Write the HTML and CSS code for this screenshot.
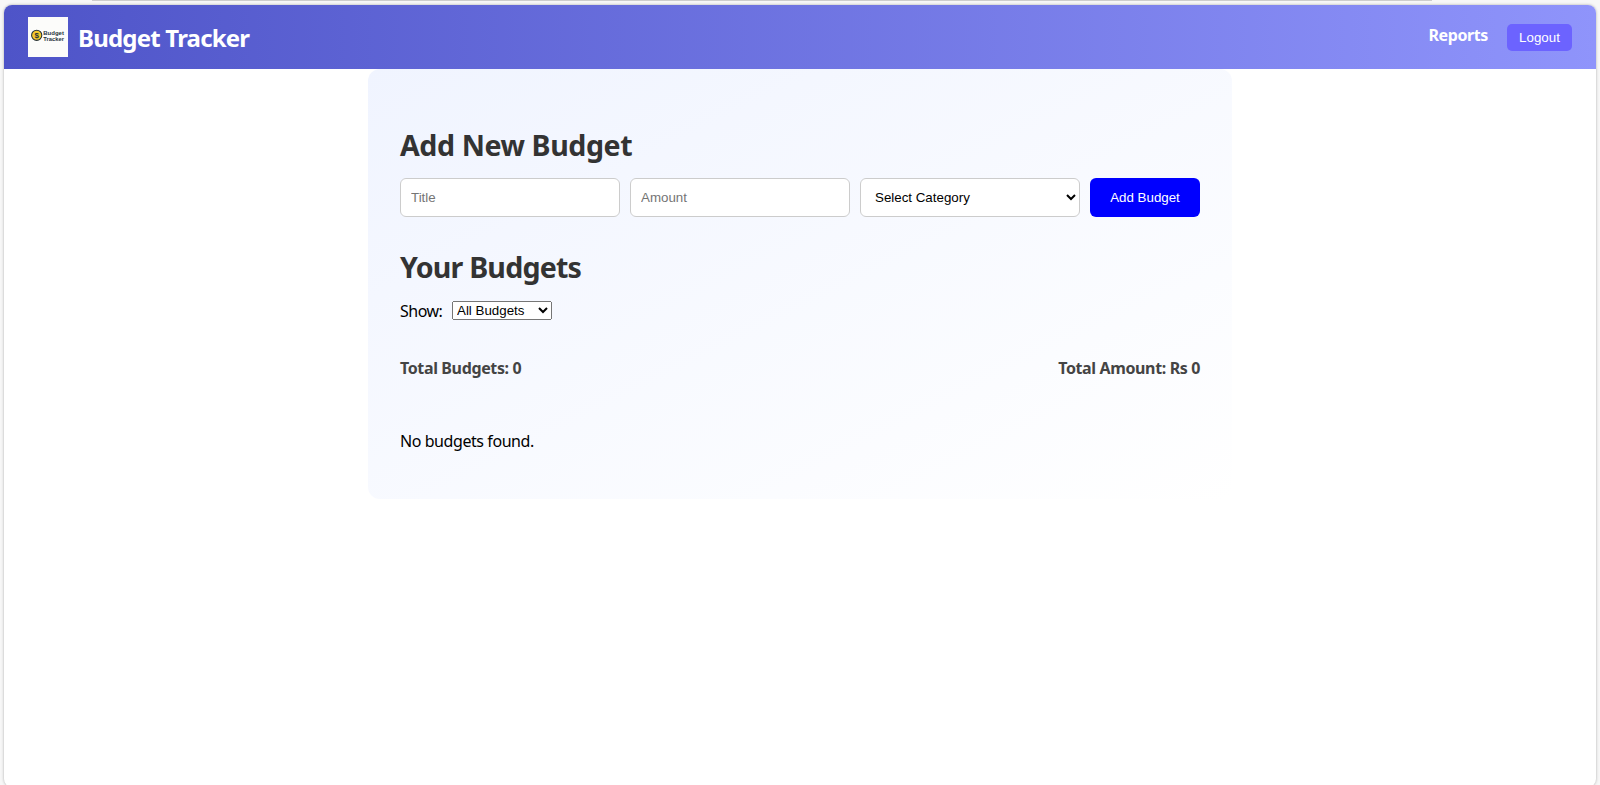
FILE: index.html
```html
<!DOCTYPE html>
<html lang="en">
<head>
<meta charset="utf-8">
<title>Budget Tracker</title>
<link rel="stylesheet" href="styles.css">
</head>
<body>
<div class="top-line"></div>
<div class="window">
  <header class="navbar">
    <div class="brand">
      <svg class="logo" viewBox="0 0 40 40" width="40" height="40">
        <rect width="40" height="40" fill="#fcfcfa"/>
        <circle cx="8.7" cy="18.3" r="5.1" fill="#f6c92c" stroke="#27333a" stroke-width="1.1"/>
        <text class="logo-coin" x="8.7" y="21.2" text-anchor="middle">$</text>
        <text class="logo-word" x="15.3" y="18.2" textLength="20.6" lengthAdjust="spacingAndGlyphs">Budget</text>
        <text class="logo-word" x="15.3" y="24.2" textLength="20.6" lengthAdjust="spacingAndGlyphs">Tracker</text>
      </svg>
      <span class="brand-name">Budget Tracker</span>
    </div>
    <nav class="nav-links">
      <a class="reports">Reports</a>
      <button class="logout">Logout</button>
    </nav>
  </header>
  <main class="card">
    <h2 class="heading add-heading">Add New Budget</h2>
    <form class="budget-form">
      <input class="field" type="text" placeholder="Title">
      <input class="field" type="text" placeholder="Amount">
      <select class="field field-select"><option>Select Category</option></select>
      <button class="add-button" type="button">Add Budget</button>
    </form>
    <h2 class="heading list-heading">Your Budgets</h2>
    <div class="filter">
      <label class="filter-label">Show:</label>
      <select class="filter-select"><option>All Budgets</option></select>
    </div>
    <div class="summary">
      <span class="total-count">Total Budgets: 0</span>
      <span class="total-amount">Total Amount: Rs 0</span>
    </div>
    <p class="empty">No budgets found.</p>
  </main>
</div>
</body>
</html>
```
FILE: styles.css
```css
* { box-sizing: border-box; }
body {
  margin: 0;
  height: 785px;
  overflow: hidden;
  background: #f7f7f7;
  font-family: "Segoe UI", "Noto Sans", "Open Sans", sans-serif;
  font-size: 16px;
  color: #000;
}
.top-line { height: 1px; margin: 0 168px 4px 92px; background: #cdcdcd; }
.window {
  height: 782px;
  margin: 0 4px;
  border-radius: 8px;
  overflow: hidden;
  background: #fff;
  box-shadow: 0 0 3px rgba(0, 0, 0, 0.3);
}
.navbar {
  height: 64px;
  padding: 0 24px;
  display: flex;
  align-items: center;
  justify-content: space-between;
  background: linear-gradient(90deg, #4e54c8, #8f94fb);
}
.brand { display: flex; align-items: center; gap: 10px; }
.logo { display: block; }
.logo-coin { font: bold 8px "Liberation Sans", Arial, sans-serif; fill: #27333a; }
.logo-word { font: bold 5.6px "Liberation Sans", Arial, sans-serif; fill: #27333a; }
.brand-name { font-size: 24px; line-height: 32px; font-weight: 700; color: #fff; letter-spacing: -0.8px; padding-top: 2px; }
.nav-links { display: flex; align-items: center; gap: 19px; color: #fff; }
.reports { font-weight: 700; line-height: 22px; padding-bottom: 4px; letter-spacing: -0.4px; }
.logout {
  width: 65px; height: 27px; padding: 0; margin-top: 1px;
  border: 0; border-radius: 5px; background: #6c63ff; color: #fff;
  font: 13.333px "Liberation Sans", Arial, sans-serif;
}
.card {
  width: 864px;
  height: 430px;
  margin: 0 auto;
  padding: 56px 32px 0;
  border-radius: 12px;
  background: linear-gradient(to bottom right, #f0f4ff, #fff);
}
.heading { margin: 0; font-size: 28.6px; line-height: 40px; font-weight: 700; color: #333; }
.add-heading { letter-spacing: -0.43px; }
.budget-form { display: flex; gap: 10px; margin-top: 13px; }
.field {
  width: 220px; height: 39px; padding: 0 10px;
  border: 1px solid #ccc; border-radius: 6px; background: #fff;
  font: 13.333px "Liberation Sans", Arial, sans-serif;
}
.field::placeholder { color: #757575; }
.add-button {
  width: 110px; height: 39px; padding: 0; border: 0; border-radius: 6px;
  background: #00f; color: #fff;
  font: 13.333px "Liberation Sans", Arial, sans-serif;
}
.list-heading { margin-top: 30px; letter-spacing: -0.8px; }
.filter { display: flex; align-items: flex-start; gap: 10px; margin-top: 13px; height: 22px; }
.filter-label { width: 42px; line-height: 22px; white-space: nowrap; letter-spacing: -0.5px; }
.filter-select { width: 100px; height: 19px; margin-top: 1px; font: 13.333px "Liberation Sans", Arial, sans-serif; }
.summary { display: flex; justify-content: space-between; margin-top: 35px; line-height: 22px; font-weight: 700; color: #444; letter-spacing: -0.37px; }
.empty { margin: 51px 0 0; line-height: 22px; letter-spacing: -0.43px; }
```
